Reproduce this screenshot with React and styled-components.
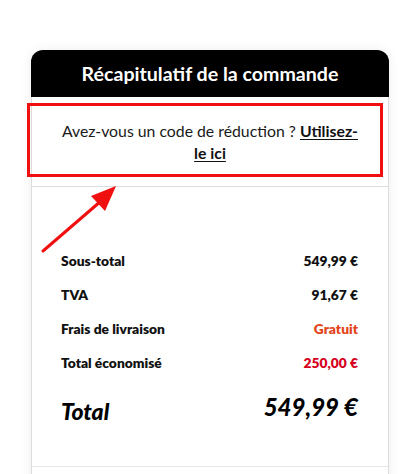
import React from 'react';
import styled, { createGlobalStyle } from 'styled-components';

const Global = createGlobalStyle`
  body {
    margin: 0;
    background: #fff;
    font-family: "Lato", "Liberation Sans", sans-serif;
    color: #111;
  }
`;

const rows = [
  { label: 'Sous-total', value: '549,99 €' },
  { label: 'TVA', value: '91,67 €' },
  { label: 'Frais de livraison', value: 'Gratuit', tone: '#e2461d' },
  { label: 'Total économisé', value: '250,00 €', tone: '#d6001c' },
];

function App() {
  return (
    <Page>
      <Global />
      <Card>
        <Header>Récapitulatif de la commande</Header>
        <Coupon>
          Avez-vous un code de réduction ? <CouponLink href="#">Utilisez-le ici</CouponLink>
        </Coupon>
        <Summary>
          {rows.map((r) => (
            <Row key={r.label}>
              <span>{r.label}</span>
              <Value $tone={r.tone}>{r.value}</Value>
            </Row>
          ))}
          <TotalRow>
            <TotalLabel>Total</TotalLabel>
            <TotalValue>549,99 €</TotalValue>
          </TotalRow>
        </Summary>
        <Footer />
      </Card>

      {/* annotation layered over the screenshot */}
      <Highlight />
      <Arrow viewBox="0 0 418 474" width="418" height="474">
        <line x1="43" y1="251" x2="101" y2="201" stroke="#f01010" strokeWidth="3" strokeLinecap="round" />
        <polygon points="116,186 91,196 105,211" fill="#f01010" />
      </Arrow>
    </Page>
  );
}

const Page = styled.div`
  position: relative;
  width: 418px;
  height: 474px;
  overflow: hidden;
  padding-top: 50px;
  box-sizing: border-box;
`;

const Card = styled.div`
  width: 358px;
  margin-left: 31px;
  box-sizing: border-box;
  border: 1px solid #dcdcdc;
  border-bottom: none;
  border-radius: 12px 12px 0 0;
  box-shadow: 0 0 12px rgba(0, 0, 0, 0.07);
  background: #fff;
`;

const Header = styled.div`
  height: 47px;
  margin: -1px -1px 0;
  border-radius: 12px 12px 0 0;
  background: #000;
  color: #fff;
  font-size: 19.6px;
  font-weight: 700;
  display: flex;
  align-items: center;
  justify-content: center;
`;

const Coupon = styled.div`
  height: 90px;
  box-sizing: border-box;
  padding: 23px 26px 0;
  border-bottom: 1px solid #dedede;
  text-align: center;
  font-size: 15.8px;
  line-height: 22px;
  color: #1a1a1a;
`;

const CouponLink = styled.a`
  color: #111;
  font-weight: 700;
  text-decoration: underline;
  text-underline-offset: 2px;
`;

const Summary = styled.div`
  padding: 56px 30px 0 29px;
  height: 280px;
  box-sizing: border-box;
  border-bottom: 1px solid #e6e6e6;
`;

const Row = styled.div`
  display: flex;
  justify-content: space-between;
  align-items: center;
  height: 34px;
  font-size: 13.8px;
  font-weight: 800;
  color: #111;
`;

const Value = styled.span`
  color: ${(p) => p.$tone || '#111'};
`;

const TotalRow = styled.div`
  display: flex;
  justify-content: space-between;
  align-items: flex-start;
  margin-top: 13px;
  font-style: italic;
  font-weight: 900;
  color: #000;
`;

const TotalLabel = styled.span`
  font-size: 23px;
  padding-top: 5px;
`;

const TotalValue = styled.span`
  font-size: 24px;
`;

const Footer = styled.div`
  height: 40px;
`;

const Highlight = styled.div`
  position: absolute;
  left: 27px;
  top: 103px;
  width: 356px;
  height: 74px;
  box-sizing: border-box;
  border: 3px solid #f01010;
  pointer-events: none;
`;

const Arrow = styled.svg`
  position: absolute;
  left: 0;
  top: 0;
  pointer-events: none;
`;

export default App;
